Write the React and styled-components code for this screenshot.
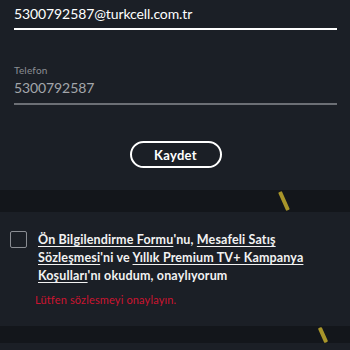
import React from 'react';
import styled, { createGlobalStyle } from 'styled-components';

const GlobalStyle = createGlobalStyle`
  html, body {
    margin: 0;
    padding: 0;
    background: #1b1f26;
  }
  body {
    font-family: Lato, "Noto Sans", sans-serif;
    color: #ffffff;
  }
`;

const Page = styled.div`
  width: 350px;
  height: 350px;
  overflow: hidden;
  background: #1b1f26;
  display: flex;
  flex-direction: column;
`;

const Form = styled.div`
  padding: 0 13px 0 14px;
  display: flex;
  flex-direction: column;
`;

const Field = styled.div`
  display: flex;
  flex-direction: column;
  gap: 2px;
  margin-top: ${(p) => p.$top || 0}px;
`;

const Label = styled.label`
  font-size: 10px;
  line-height: 12px;
  color: #8b8e94;
  letter-spacing: 0.2px;
`;

const Value = styled.div`
  font-size: 14px;
  line-height: 20px;
  letter-spacing: -0.1px;
  padding: ${(p) => (p.$muted ? '0 0 5px' : '4px 0 4px')};
  color: ${(p) => (p.$muted ? '#a3a6ab' : '#ffffff')};
  border-bottom: 2px solid ${(p) => (p.$muted ? '#6c6f75' : '#ffffff')};
`;

const ButtonRow = styled.div`
  display: flex;
  justify-content: center;
  margin-top: 36px;
`;

const SaveButton = styled.button`
  width: 92px;
  height: 27px;
  border: 2px solid #ffffff;
  border-radius: 14px;
  background: transparent;
  color: #ffffff;
  font-family: Lato, sans-serif;
  font-weight: 700;
  font-size: 13px;
  letter-spacing: 0.3px;
  cursor: pointer;
`;

const Strip = styled.div`
  position: relative;
  height: ${(p) => p.$h}px;
  margin-top: ${(p) => p.$top}px;
  background: #13161b;
`;

const Mark = styled.span`
  position: absolute;
  left: ${(p) => p.$left}px;
  top: 1px;
  width: 4px;
  height: ${(p) => p.$h}px;
  background: #a8952a;
  transform: rotate(-24deg);
  border-radius: 1px;
`;

const Agreement = styled.div`
  padding: 19px 13px 0 10px;
  display: flex;
  flex-direction: column;
`;

const CheckRow = styled.div`
  display: flex;
  gap: 11px;
  align-items: flex-start;
`;

const Box = styled.span`
  flex: none;
  width: 15px;
  height: 15px;
  border: 1.5px solid #8a8d93;
  border-radius: 2px;
`;

const Terms = styled.p`
  margin: 0;
  font-size: 12.5px;
  line-height: 18px;
  font-weight: 700;
  letter-spacing: 0.15px;
  color: #f2f2f2;
`;

const Link = styled.a`
  color: inherit;
  text-decoration: underline;
  text-underline-offset: 2px;
`;

const ErrorText = styled.div`
  margin: 9px 0 0 25px;
  font-size: 11px;
  line-height: 12px;
  letter-spacing: 0.15px;
  color: #cc1430;
`;

export default function App() {
  return (
    <Page>
      <GlobalStyle />
      <Form>
        <Field>
          <Value>5300792587@turkcell.com.tr</Value>
        </Field>
        <Field $top={34}>
          <Label>Telefon</Label>
          <Value $muted>5300792587</Value>
        </Field>
        <ButtonRow>
          <SaveButton type="button">Kaydet</SaveButton>
        </ButtonRow>
      </Form>

      <Strip $h={22} $top={22}>
        <Mark $left={282} $h={20} />
      </Strip>

      <Agreement>
        <CheckRow>
          <Box />
          <Terms>
            <Link href="#">Ön Bilgilendirme Formu</Link>'nu,{' '}
            <Link href="#">Mesafeli Satış</Link>{' '}
            <Link href="#">Sözleşmesi</Link>'ni ve{' '}
            <Link href="#">Yıllık Premium TV+ Kampanya</Link>{' '}
            <Link href="#">Koşulları</Link>'nı okudum, onaylıyorum
          </Terms>
        </CheckRow>
        <ErrorText>Lütfen sözlesmeyi onaylayın.</ErrorText>
      </Agreement>

      <Strip $h={17} $top={20}>
        <Mark $left={321} $h={16} />
      </Strip>
    </Page>
  );
}
